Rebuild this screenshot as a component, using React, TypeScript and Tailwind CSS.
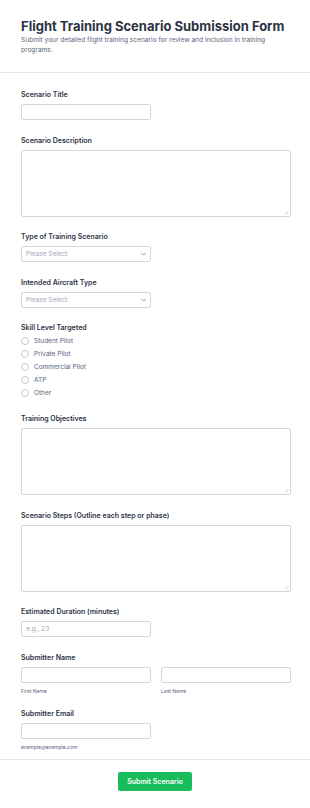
import React from 'react';

const Label = ({ children }: { children: React.ReactNode }) => (
  <div className="text-[7px] leading-[10px] font-semibold text-[#2c3345] mb-[4px]">{children}</div>
);

const TextInput = ({ placeholder, className = 'w-[130px]' }: { placeholder?: string; className?: string }) => (
  <input
    type="text"
    placeholder={placeholder}
    className={`${className} block h-[16px] border border-[#d3d6e0] rounded-[2px] px-[4px] text-[6.5px] text-[#2c3345] placeholder:text-[#a0a6b5] outline-none bg-white`}
  />
);

// native handle is too dark, so draw a faint one
const TextArea = () => (
  <div className="relative w-[270px] h-[67px]">
    <textarea className="block resize-none w-full h-full border border-[#d3d6e0] rounded-[2px] p-[4px] text-[7px] outline-none bg-white" />
    <svg className="absolute right-[2px] bottom-[2px] pointer-events-none" width="5" height="5" viewBox="0 0 5 5">
      <path d="M4.5 0.5L0.5 4.5M4.5 2.5L2.5 4.5" stroke="#c4c8d2" strokeWidth="0.6" />
    </svg>
  </div>
);

const Select = () => (
  <div className="relative w-[130px] h-[16px]">
    <select
      defaultValue=""
      className="block appearance-none w-full h-[16px] border border-[#d3d6e0] rounded-[2px] px-[4px] text-[6.5px] text-[#a0a6b5] outline-none bg-white"
    >
      <option value="">Please Select</option>
    </select>
    <svg
      className="absolute right-[5px] top-[6px] pointer-events-none"
      width="5"
      height="4"
      viewBox="0 0 10 7"
      fill="none"
    >
      <path d="M1 1.5l4 4 4-4" stroke="#6f7689" strokeWidth="1.6" strokeLinecap="round" strokeLinejoin="round" />
    </svg>
  </div>
);

const skillLevels = ['Student Pilot', 'Private Pilot', 'Commercial Pilot', 'ATP', 'Other'];

export default function App() {
  return (
    <div
      className="w-[310px] min-h-[808px] bg-white leading-[10px]"
      style={{ fontFamily: 'Inter, "Liberation Sans", sans-serif' }}
    >
      {/* Header */}
      <div className="px-[21px] pt-[17px] pb-[17px] border-b border-[#e6e8ee]">
        <h1 className="text-[13px] leading-[18px] font-bold text-[#2c3345]">
          Flight Training Scenario Submission Form
        </h1>
        <p className="text-[6.6px] leading-[10px] text-[#57647e] pr-[10px]">
          Submit your detailed flight training scenario for review and inclusion in training programs.
        </p>
      </div>

      {/* Fields */}
      <div className="px-[21px] pt-[17px] pb-[9px] flex flex-col gap-[15.5px] border-b border-[#e6e8ee]">
        <div>
          <Label>Scenario Title</Label>
          <TextInput />
        </div>

        <div>
          <Label>Scenario Description</Label>
          <TextArea />
        </div>

        <div>
          <Label>Type of Training Scenario</Label>
          <Select />
        </div>

        <div>
          <Label>Intended Aircraft Type</Label>
          <Select />
        </div>

        <div>
          <div className="text-[7px] leading-[10px] font-semibold text-[#2c3345] mb-[2px]">Skill Level Targeted</div>
          <div className="flex flex-col">
            {skillLevels.map((level) => (
              <label key={level} className="flex items-center gap-[5px] h-[12.8px]">
                <span className="w-[8px] h-[8px] rounded-full border border-[#c3cad8] bg-white" />
                <span className="text-[6.5px] text-[#57647e]">{level}</span>
              </label>
            ))}
          </div>
        </div>

        <div>
          <Label>Training Objectives</Label>
          <TextArea />
        </div>

        <div>
          <Label>Scenario Steps (Outline each step or phase)</Label>
          <TextArea />
        </div>

        <div>
          <Label>Estimated Duration (minutes)</Label>
          <TextInput placeholder="e.g., 23" />
        </div>

        <div>
          <Label>Submitter Name</Label>
          <div className="flex gap-[10px]">
            <div className="flex flex-col">
              <TextInput />
              <span className="text-[5px] leading-[6px] text-[#57647e] mt-[5px]">First Name</span>
            </div>
            <div className="flex flex-col">
              <TextInput />
              <span className="text-[5px] leading-[6px] text-[#57647e] mt-[5px]">Last Name</span>
            </div>
          </div>
        </div>

        <div>
          <Label>Submitter Email</Label>
          <div className="flex flex-col">
            <TextInput />
            <span className="text-[5px] leading-[6px] text-[#57647e] mt-[5px]">example@example.com</span>
          </div>
        </div>
      </div>

      {/* Submit */}
      <div className="flex justify-center pt-[12px] pb-[17px]">
        <button className="w-[74px] h-[19px] bg-[#18bd5b] rounded-[2px] text-white text-[7px] font-semibold">
          Submit Scenario
        </button>
      </div>
    </div>
  );
}
